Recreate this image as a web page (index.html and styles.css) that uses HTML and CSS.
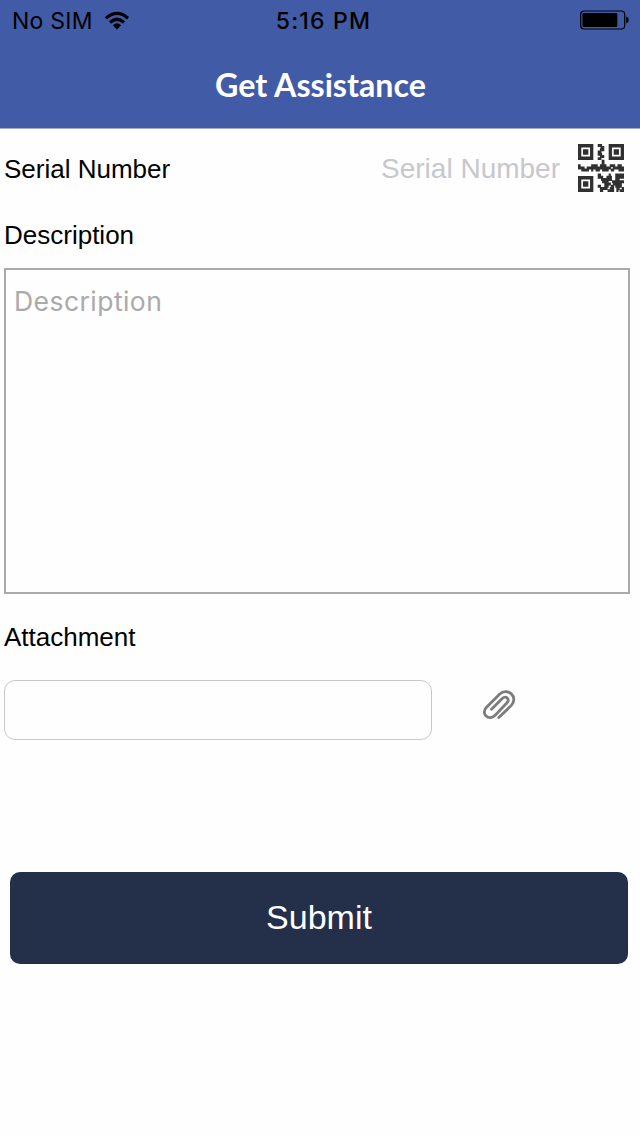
FILE: index.html
```html
<!DOCTYPE html>
<html lang="en">
<head>
<meta charset="utf-8">
<title>Get Assistance</title>
<link rel="stylesheet" href="styles.css">
</head>
<body>
<header class="header">
  <div class="status">
    <div class="carrier">
      <span>No SIM</span>
      <svg class="wifi" width="26" height="20" viewBox="0 0 26 20" fill="none" stroke="#000" stroke-width="3.3">
        <path d="M2 7.2Q13-2.4 24 7.2"/>
        <path d="M6 11.4Q13 5.2 20 11.4"/>
        <path d="M8.9 14.3Q13 10.4 17.1 14.3L13 18.4Z" fill="#000" stroke="none"/>
      </svg>
    </div>
    <span class="clock">5:16 PM</span>
    <svg class="battery" width="50" height="20" viewBox="0 0 50 20">
      <rect x="0.7" y="1" width="44" height="18" rx="3.5" fill="none" stroke="#000" stroke-width="1.2"/>
      <rect x="2.5" y="3" width="34.8" height="14" rx="1.2"/>
      <path d="M46.2 6.5Q48.8 7.2 48.8 10T46.2 13.5Z"/>
    </svg>
  </div>
  <h1 class="title">Get Assistance</h1>
</header>
<main class="form">
  <div class="serial">
    <label class="label">Serial Number</label>
    <span class="serial-hint">Serial Number</span>
    <svg class="qr" width="46" height="48" viewBox="0 0 21 21" preserveAspectRatio="none" fill="#303030">
      <path fill-rule="evenodd" d="M0 0h7v7H0zM1.5 1.5v4h4v-4zM14 0h7v7h-7zM15.5 1.5v4h4v-4zM0 14h7v7H0zM1.5 15.5v4h4v-4z"/>
      <path d="M2.3 2.3h2.4v2.4H2.3zM16.3 2.3h2.4v2.4h-2.4zM2.3 16.3h2.4v2.4H2.3z"/>
      <path stroke="#303030" stroke-width="1.3" d="M9 .65h2M10.3 1.5h1.7M10 2.5h2M9 3.5h1.7M9 4.5h2M10 5.5h2M9 6.4h1.7M10.8 7.5h1.3M10.8 8.5h1.3M0 9.5h1.2M6 9.5h3M10 9.5h3M14.5 9.5h2.5M18 9.5h2M0 10.5h3M4 10.5h11M16 10.5h5M1.5 11.4h3.5M6 11.4h1M8 11.4h2M11 11.4h3M15 11.4h1.5M18.5 11.4h2.5M9 13.6h1.5M14 13.6h1M17 13.6h4M9 14.5h2.5M13 14.5h2.5M17 14.5h4M10.5 15.5h5M17 15.5h2M11 16.5h3M15.5 16.5h5.5M12 17.5h3M16 17.5h4M9 18.5h1.5M12 18.5h2M15 18.5h1.5M17 18.5h3M10 19.5h3.5M14.5 19.5h2M17.5 19.5h1.5M20 19.5h1M10 20.4h1.5M13.5 20.4h3M17.5 20.4h1M19 20.4h2"/>
    </svg>
  </div>
  <label class="label description-label">Description</label>
  <div class="description">Description</div>
  <label class="label attachment-label">Attachment</label>
  <div class="attachment">
    <div class="attachment-field"></div>
    <svg class="clip" width="36" height="34" viewBox="0 0 36 34" fill="none" stroke="#7c7c7c" stroke-width="2.8" stroke-linecap="round">
      <path d="M10.5 21.3L21 10.8C25 7 29.3 11.1 25.8 15L14.2 27.2C7.8 33.4-.5 26 5.3 19.5L18.5 6.2C26.5-1.2 38 9 30.3 17.4L17.8 29.6"/>
    </svg>
  </div>
  <div class="submit">Submit</div>
</main>
</body>
</html>
```
FILE: styles.css
```css
body {
  margin: 0;
  min-height: 1136px;
  background: #fefefe;
  font-family: "Liberation Sans", Arial, sans-serif;
  color: #000;
}
.header {
  box-sizing: border-box;
  height: 129px;
  background: #425ba6;
  border-bottom: 1px solid #a5abba;
}
.status {
  box-sizing: border-box;
  display: grid;
  grid-template-columns: 1fr auto 1fr;
  align-items: center;
  height: 41px;
  padding: 0 10px 0 12px;
  font-family: Inter, sans-serif;
  font-size: 23px;
}
.carrier {
  display: flex;
  align-items: center;
  gap: 11px;
  letter-spacing: 0.25px;
}
.clock {
  padding: 1px 0 0 5px;
  font-weight: 500;
  letter-spacing: 1.2px;
}
.battery {
  justify-self: end;
  margin-bottom: 1px;
}
.title {
  margin: 0;
  padding-left: 1px;
  font: bold 32.2px/87px Lato, sans-serif;
  color: #fff;
  text-align: center;
}
.form {
  display: flex;
  flex-direction: column;
}
.label {
  font-size: 26px;
  line-height: 30px;
  padding-left: 4px;
}
.serial {
  display: flex;
  align-items: center;
  height: 48px;
  padding: 15px 16px 0 0;
}
.serial .label {
  padding-top: 2px;
}
.serial-hint {
  margin: 0 18px 0 auto;
  padding-top: 2px;
  font-size: 28px;
  color: #c7c7cc;
}
.description-label {
  margin-top: 28px;
}
.description {
  box-sizing: border-box;
  height: 326px;
  margin: 18px 10px 0 4px;
  padding: 14px 8px;
  border: 2px solid #aaa;
  font: 400 26.5px/34px Inter, sans-serif;
  letter-spacing: 0.45px;
  color: #aaa;
}
.attachment-label {
  margin-top: 28px;
}
.attachment {
  display: flex;
  margin: 28px 0 0 4px;
}
.attachment-field {
  box-sizing: border-box;
  width: 428px;
  height: 60px;
  border: 1px solid #c8c8c8;
  border-radius: 11px;
}
.clip {
  margin: 8px 0 0 49px;
}
.submit {
  height: 92px;
  margin: 132px 12px 0 10px;
  border-radius: 10px;
  background: #242f4a;
  color: #fff;
  font-size: 34px;
  line-height: 90px;
  text-align: center;
}
```
